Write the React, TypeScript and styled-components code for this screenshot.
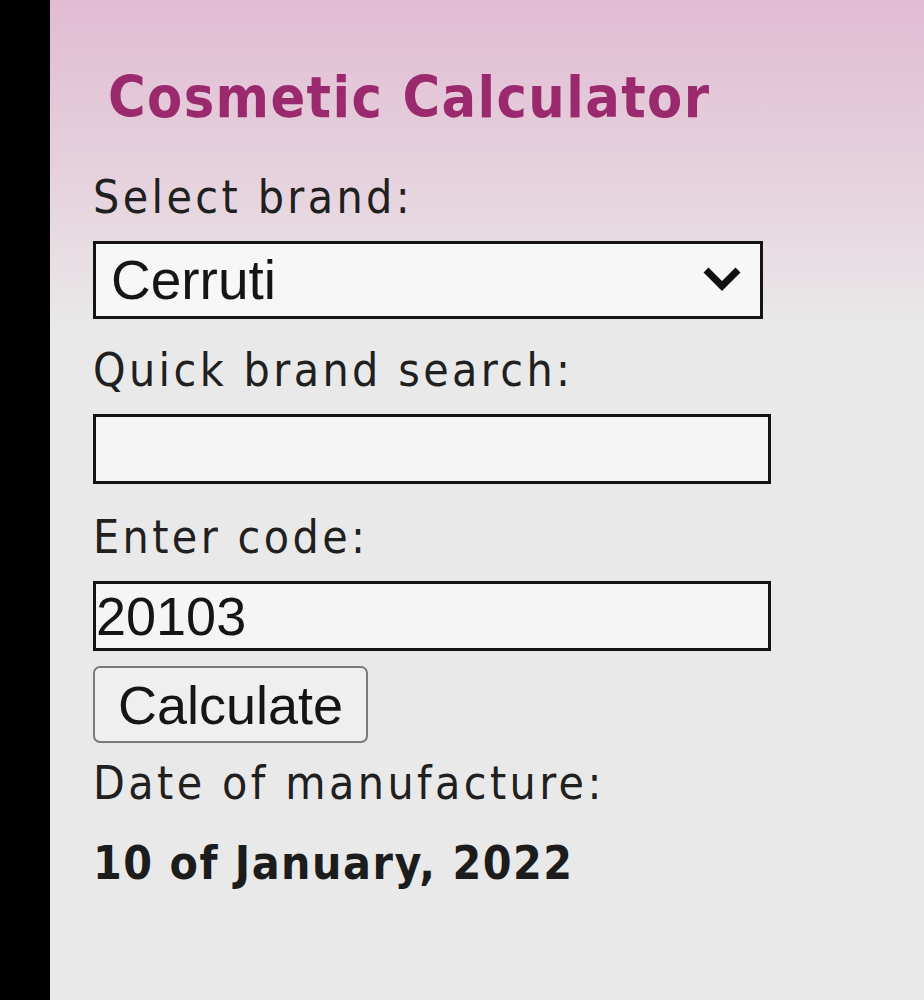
import styled, { createGlobalStyle } from 'styled-components';

const GlobalStyle = createGlobalStyle`
    html, body {
        margin: 0;
        padding: 0;
        background: #e9e9e9;
    }
`;

const Page = styled.div`
    display: flex;
    min-height: 1000px;
`;

const SideBar = styled.div`
    width: 50px;
    flex-shrink: 0;
    background: #000;
`;

const Main = styled.main`
    flex: 1;
    padding: 62px 0 0 43px;
    background: linear-gradient(to bottom, #e1bcd3 0px, #e6d2dd 180px, #e9e9e9 330px);
`;

const Title = styled.h1`
    margin: 0 0 33px 15px;
    font-family: 'DejaVu Sans Condensed', 'DejaVu Sans', sans-serif;
    font-stretch: condensed;
    font-size: 57px;
    line-height: 70px;
    font-weight: bold;
    letter-spacing: 1.4px;
    color: #9a2a6d;
`;

const Label = styled.label<{ $top?: number }>`
    display: block;
    margin: ${(p) => p.$top || 0}px 0 12px;
    font-family: 'DejaVu Sans Condensed', 'DejaVu Sans', sans-serif;
    font-stretch: condensed;
    font-size: 46px;
    line-height: 64px;
    letter-spacing: 3.4px;
    color: #202020;
`;

const SelectWrap = styled.div`
    position: relative;
    width: 670px;
`;

const Select = styled.select`
    display: block;
    width: 100%;
    height: 78px;
    box-sizing: border-box;
    padding: 0 0 0 15px;
    border: 3px solid #141414;
    background: #f7f7f7;
    font-family: 'Liberation Sans', Arial, sans-serif;
    font-size: 55px;
    color: #151515;
    appearance: none;
    outline: none;
`;

const Chevron = styled.svg`
    position: absolute;
    right: 21px;
    top: 25px;
    pointer-events: none;
`;

const Input = styled.input`
    display: block;
    width: 678px;
    height: 70px;
    box-sizing: border-box;
    padding: 0;
    border: 3px solid #141414;
    background: #f5f5f5;
    font-family: 'Liberation Sans', Arial, sans-serif;
    font-size: 54px;
    color: #151515;
    outline: none;
`;

const Button = styled.button`
    display: block;
    margin-top: 15px;
    width: 275px;
    height: 77px;
    box-sizing: border-box;
    padding: 0;
    border: 2px solid #7a7a7a;
    border-radius: 7px;
    background: #efefef;
    font-family: 'Liberation Sans', Arial, sans-serif;
    font-size: 54px;
    color: #151515;
`;

const Result = styled.div`
    margin-top: 16px;
    font-family: 'DejaVu Sans Condensed', 'DejaVu Sans', sans-serif;
    font-stretch: condensed;
    font-size: 46px;
    line-height: 64px;
    font-weight: bold;
    letter-spacing: 1.5px;
    color: #1c1c1c;
`;

const brands = ['Cerruti', 'Chanel', 'Clinique', 'Dior'];

const App = () => {
    return (
        <>
            <GlobalStyle />
            <Page>
                <SideBar />
                <Main>
                    <Title>Cosmetic Calculator</Title>
                    <Label>Select brand:</Label>
                    <SelectWrap>
                        <Select defaultValue="Cerruti">
                            {brands.map((b) => (
                                <option key={b}>{b}</option>
                            ))}
                        </Select>
                        <Chevron width="40" height="26" viewBox="0 0 40 26">
                            <path d="M4 4 L20 20 L36 4" fill="none" stroke="#111" strokeWidth="7" />
                        </Chevron>
                    </SelectWrap>
                    <Label $top={19}>Quick brand search:</Label>
                    <Input type="text" />
                    <Label $top={21}>Enter code:</Label>
                    <Input type="text" defaultValue="20103" />
                    <Button type="button">Calculate</Button>
                    <Label $top={8}>Date of manufacture:</Label>
                    <Result>10 of January, 2022</Result>
                </Main>
            </Page>
        </>
    );
};

export default App;
